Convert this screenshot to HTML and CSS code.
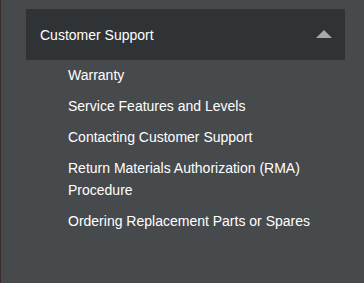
FILE: index.html
```html
<!DOCTYPE html>
<html lang="en">
<head>
    <meta charset="UTF-8">
    <meta name="viewport" content="width=device-width, initial-scale=1.0">
    <title>Customer Support</title>
    <link rel="stylesheet" href="styles.css">
</head>
<body>
    <nav class="sidebar">
        <!-- section header -->
        <div class="section-head">
            <span>Customer Support</span>
            <span class="caret"></span>
        </div>

        <ul class="section-links">
            <li><a href="#">Warranty</a></li>
            <li><a href="#">Service Features and Levels</a></li>
            <li><a href="#">Contacting Customer Support</a></li>
            <li><a href="#">Return Materials Authorization (RMA) Procedure</a></li>
            <li><a href="#">Ordering Replacement Parts or Spares</a></li>
        </ul>
    </nav>
</body>
</html>
```

FILE: styles.css
```css
* {
    margin: 0;
    padding: 0;
    box-sizing: border-box;
    font-family: 'Liberation Sans', Arial, sans-serif;
}

body {
    background: #474a4d;
    color: #fff;
    height: 283px;
    border-left: 1px solid #3b2b2b;
}

.sidebar {
    padding: 9px 19px 0 25px;
}

/* section header */
.section-head {
    display: flex;
    align-items: center;
    justify-content: space-between;
    height: 51px;
    padding: 0 13px 0 14px;
    background: #303336;
    font-size: 14px;
}

.caret {
    width: 0;
    height: 0;
    border-left: 8px solid transparent;
    border-right: 8px solid transparent;
    border-bottom: 8px solid #a5a9ac;
    margin-top: -2px;
}

/* links */
.section-links {
    list-style: none;
    padding: 4px 30px 0 42px;
}

.section-links li {
    line-height: 22px;
    margin-bottom: 9px;
    font-size: 14px;
}

.section-links a {
    color: #fff;
    text-decoration: none;
}
```
